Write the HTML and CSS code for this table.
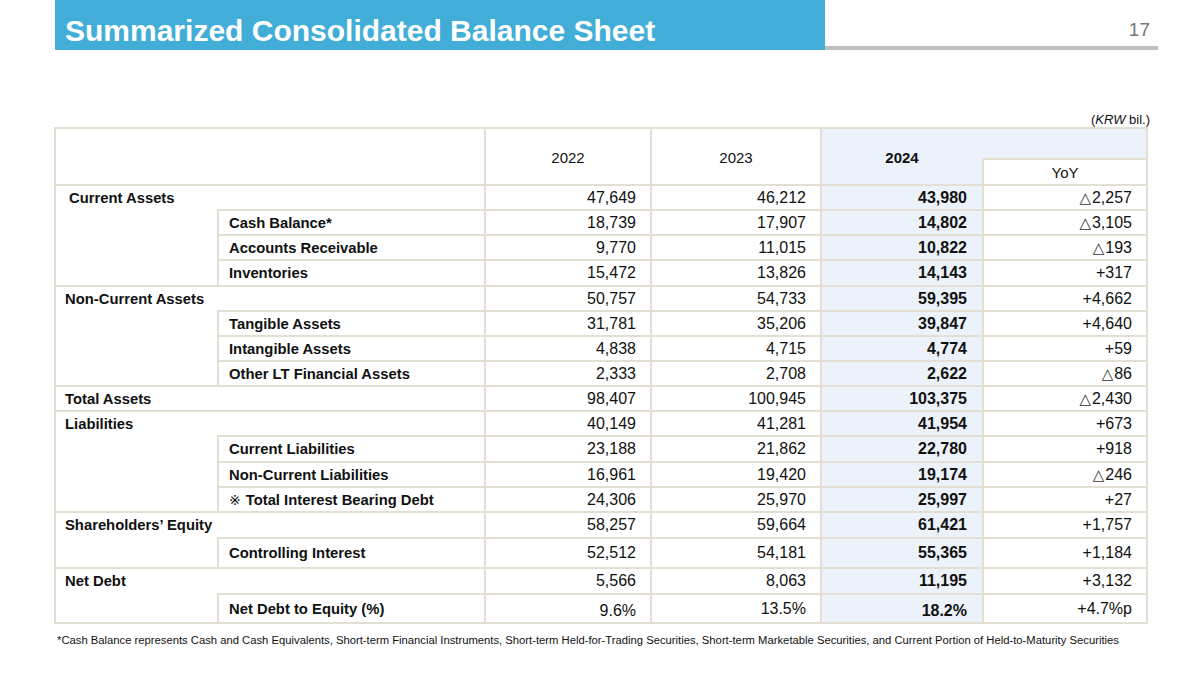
FILE: index.html
```html
<!DOCTYPE html>
<html lang="en">
<head>
<meta charset="utf-8">
<title>Summarized Consolidated Balance Sheet</title>
<link rel="stylesheet" href="styles.css">
</head>
<body>
<header class="top">
  <div class="title-box"><h1>Summarized Consolidated Balance Sheet</h1></div>
  <div class="rule"><span class="page">17</span></div>
</header>
<div class="unit">(<i>KRW</i> bil.)</div>
<div class="sheet">
  <div class="c hd-lab"></div>
  <div class="c hd">2022</div>
  <div class="c hd">2023</div>
  <div class="c hd h24">2024</div>
  <div class="c hd-blue"></div>
  <div class="c hd yoy-h">YoY</div>

  <div class="c lab first">Current Assets</div>
  <div class="c num">47,649</div><div class="c num">46,212</div><div class="c num b24">43,980</div><div class="c num last"><span class="tri">△</span>2,257</div>
  <div class="c gap span3"></div>
  <div class="c sub">Cash Balance*</div>
  <div class="c num">18,739</div><div class="c num">17,907</div><div class="c num b24">14,802</div><div class="c num last"><span class="tri">△</span>3,105</div>
  <div class="c sub">Accounts Receivable</div>
  <div class="c num">9,770</div><div class="c num">11,015</div><div class="c num b24">10,822</div><div class="c num last"><span class="tri">△</span>193</div>
  <div class="c sub">Inventories</div>
  <div class="c num">15,472</div><div class="c num">13,826</div><div class="c num b24">14,143</div><div class="c num last">+317</div>

  <div class="c lab">Non-Current Assets</div>
  <div class="c num">50,757</div><div class="c num">54,733</div><div class="c num b24">59,395</div><div class="c num last">+4,662</div>
  <div class="c gap span3"></div>
  <div class="c sub">Tangible Assets</div>
  <div class="c num">31,781</div><div class="c num">35,206</div><div class="c num b24">39,847</div><div class="c num last">+4,640</div>
  <div class="c sub">Intangible Assets</div>
  <div class="c num">4,838</div><div class="c num">4,715</div><div class="c num b24">4,774</div><div class="c num last">+59</div>
  <div class="c sub">Other LT Financial Assets</div>
  <div class="c num">2,333</div><div class="c num">2,708</div><div class="c num b24">2,622</div><div class="c num last"><span class="tri">△</span>86</div>

  <div class="c lab">Total Assets</div>
  <div class="c num">98,407</div><div class="c num">100,945</div><div class="c num b24">103,375</div><div class="c num last"><span class="tri">△</span>2,430</div>

  <div class="c lab">Liabilities</div>
  <div class="c num">40,149</div><div class="c num">41,281</div><div class="c num b24">41,954</div><div class="c num last">+673</div>
  <div class="c gap span3"></div>
  <div class="c sub">Current Liabilities</div>
  <div class="c num">23,188</div><div class="c num">21,862</div><div class="c num b24">22,780</div><div class="c num last">+918</div>
  <div class="c sub">Non-Current Liabilities</div>
  <div class="c num">16,961</div><div class="c num">19,420</div><div class="c num b24">19,174</div><div class="c num last"><span class="tri">△</span>246</div>
  <div class="c sub"><span class="mark">※</span><span>Total Interest Bearing Debt</span></div>
  <div class="c num">24,306</div><div class="c num">25,970</div><div class="c num b24">25,997</div><div class="c num last">+27</div>

  <div class="c lab">Shareholders’ Equity</div>
  <div class="c num">58,257</div><div class="c num">59,664</div><div class="c num b24">61,421</div><div class="c num last">+1,757</div>
  <div class="c gap"></div>
  <div class="c sub">Controlling Interest</div>
  <div class="c num">52,512</div><div class="c num">54,181</div><div class="c num b24">55,365</div><div class="c num last">+1,184</div>

  <div class="c lab">Net Debt</div>
  <div class="c num">5,566</div><div class="c num">8,063</div><div class="c num b24">11,195</div><div class="c num last">+3,132</div>
  <div class="c gap"></div>
  <div class="c sub">Net Debt to Equity (%)</div>
  <div class="c num low">9.6%</div><div class="c num">13.5%</div><div class="c num b24 low">18.2%</div><div class="c num last">+4.7%p</div>
</div>
<p class="note">*Cash Balance represents Cash and Cash Equivalents, Short-term Financial Instruments, Short-term Held-for-Trading Securities, Short-term Marketable Securities, and Current Portion of Held-to-Maturity Securities</p>
</body>
</html>
```

FILE: styles.css
```css
html, body {
  margin: 0;
  padding: 0;
  background: #ffffff;
}
body {
  width: 1200px;
  height: 675px;
  overflow: hidden;
  font-family: "Liberation Sans", Arial, sans-serif;
  color: #111111;
}
.top {
  display: flex;
  align-items: stretch;
  height: 50px;
  padding-left: 55px;
}
.title-box {
  width: 770px;
  background: #42aed8;
  display: flex;
  align-items: flex-end;
}
.title-box h1 {
  margin: 0 0 2px 10px;
  font-size: 30px;
  line-height: 34px;
  font-weight: bold;
  color: #ffffff;
  white-space: nowrap;
}
.rule {
  width: 333px;
  box-sizing: border-box;
  border-bottom: 4px solid #bfbfbf;
  display: flex;
  justify-content: flex-end;
  align-items: flex-start;
  padding-right: 8px;
}
.page {
  margin-top: 19px;
  font-size: 19px;
  line-height: 22px;
  color: #767676;
}
.unit {
  margin-top: 62px;
  padding-right: 50px;
  text-align: right;
  font-size: 13px;
  line-height: 16px;
  color: #111111;
}
.unit i {
  font-style: italic;
}
.sheet {
  margin-top: -1px;
  margin-left: 54px;
  width: 1094px;
  box-sizing: border-box;
  display: grid;
  grid-template-columns: 163px 267px 166px 170px 162px 164px;
  grid-template-rows: 31px 26px 25px 25px 25px 26px 25px 25px 25px 25px 25px 25px 26px 25px 25px 26px 30px 26px 29px;
  border-right: 2px solid #e3e0d3;
  border-bottom: 2px solid #e3e0d3;
}
.c {
  box-sizing: border-box;
  border-top: 2px solid #e3e0d3;
  border-left: 2px solid #e3e0d3;
  display: flex;
  align-items: center;
  white-space: nowrap;
  min-width: 0;
}
.hd-lab {
  grid-column: span 2;
  grid-row: span 2;
}
.hd {
  grid-row: span 2;
  justify-content: center;
  font-size: 15px;
  padding-top: 2px;
}
.h24 {
  background: #ebf2fa;
  font-weight: bold;
}
.hd-blue {
  background: #ebf2fa;
  border-left: none;
}
.yoy-h {
  grid-row: auto;
  font-size: 15px;
  padding-top: 0;
}
.lab {
  grid-column: span 2;
  padding-left: 9px;
  font-weight: bold;
  font-size: 14.8px;
}
.lab.first {
  padding-left: 13px;
}
.gap {
  border-top: none;
}
.span3 {
  grid-row: span 3;
}
.sub {
  padding-left: 10px;
  font-weight: bold;
  font-size: 14.8px;
}
.mark {
  font-family: "DejaVu Sans", sans-serif;
  font-weight: normal;
  font-size: 14px;
  margin-right: 5px;
}
.num {
  justify-content: flex-end;
  padding-right: 14px;
  font-size: 16px;
}
.b24 {
  background: #ebf2fa;
  font-weight: bold;
  padding-right: 15px;
}
.last {
  padding-right: 14px;
}
.low {
  padding-top: 5px;
}
.tri {
  font-family: "DejaVu Sans", sans-serif;
  font-size: 15px;
  color: #333333;
  margin-right: 1px;
}
.note {
  margin: 9px 0 0 57px;
  font-size: 11.25px;
  line-height: 14px;
  color: #111111;
  white-space: nowrap;
}
```
